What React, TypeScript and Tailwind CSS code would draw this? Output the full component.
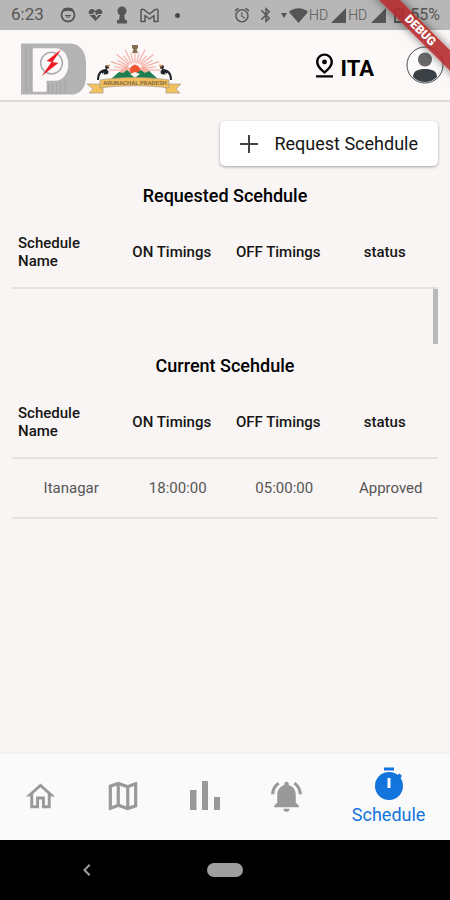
import React from "react";
import {
  MdAlarm,
  MdBluetooth,
  MdChevronLeft,
  MdNotificationsActive,
  MdOutlineHome,
  MdOutlineMap,
  MdOutlinePinDrop,
} from "react-icons/md";

const columns = ["Schedule Name", "ON Timings", "OFF Timings", "status"];

const currentSchedules = [
  { name: "Itanagar", on: "18:00:00", off: "05:00:00", status: "Approved" },
];

const rays = Array.from({ length: 17 }, (_, i) => {
  const angle = Math.PI + (i * Math.PI) / 16;
  const length = i % 2 === 0 ? 26 : 21;
  return {
    x1: 49 + Math.cos(angle) * 8,
    y1: 28 + Math.sin(angle) * 7,
    x2: 49 + Math.cos(angle) * length,
    y2: 28 + Math.sin(angle) * (length - 4),
  };
});

const SignalIcon = () => (
  <svg width="15" height="15" viewBox="0 0 15 15" fill="currentColor">
    <path d="M15 0v15H0z" />
  </svg>
);

const StatusBar = () => (
  <div className="flex h-[30px] items-center justify-between bg-[#b8b7b7] pl-[11px] pr-[10px] text-[#555555]">
    <div className="flex items-center">
      <span className="w-12 text-[17px]">6:23</span>
      <svg width="18" height="18" viewBox="0 0 18 18" fill="none" stroke="currentColor">
        <circle cx="9" cy="9" r="6.5" strokeWidth="1.8" />
        <path d="M3.500 5.500L5 2.500h8l1.500 3C12 4 6 4 3.500 5.500z" fill="currentColor" />
        <path d="M6 9.500h6M7 11h4" strokeWidth="1.200" />
      </svg>
      <svg className="ml-[11px]" width="15" height="14" viewBox="0 0 15 14" fill="currentColor">
        <path d="M7.500 13L1.500 7C-.5 4 1.500 1 4 1c1.500 0 2.700.8 3.500 2C8.300 1.800 9.500 1 11 1c2.500 0 4.500 3 2.500 6z" />
        <path d="M1 6.500h4l1.500-2 2 4 1.500-2h4" fill="none" stroke="#b8b7b7" strokeWidth="1.200" />
      </svg>
      <svg className="ml-[13px]" width="12" height="18" viewBox="0 0 12 18" fill="currentColor">
        <circle cx="6" cy="5" r="4.500" />
        <path d="M4 8h4l1 6h2v3.500H1V14h2z" />
      </svg>
      <svg className="ml-3" width="19" height="15" viewBox="0 0 19 15" fill="none" stroke="currentColor" strokeWidth="1.500" strokeLinejoin="round">
        <path d="M1 2.500V13.500H5V7.500L9.500 11 14 7.500v6h4v-11C18 1 16.300.8 15 1.700L9.500 6 4 1.700C2.700.8 1 1 1 2.500z" />
      </svg>
      <span className="ml-4 size-[5px] rounded-full bg-[#4a4a4a]" />
    </div>
    <div className="flex items-center">
      <MdAlarm size={18} />
      <MdBluetooth className="ml-[6px]" size={18} />
      <svg className="ml-[6px]" width="6" height="5" viewBox="0 0 6 5" fill="currentColor">
        <path d="M0 0h6L3 5z" />
      </svg>
      <svg className="ml-[2px]" width="19" height="15" viewBox="0 0 19 15" fill="currentColor">
        <path d="M0 4C5-1 14-1 19 4L9.500 15z" />
      </svg>
      <span className="ml-px text-sm font-light">HD</span>
      <span className="ml-[3px]">
        <SignalIcon />
      </span>
      <span className="ml-[2px] text-sm font-light">HD</span>
      <span className="ml-[4px]">
        <SignalIcon />
      </span>
      <svg className="ml-2" width="10" height="16" viewBox="0 0 10 16" fill="none" stroke="currentColor" strokeWidth="1.800">
        <path d="M1 2.500h8v12.500H1zM3.500 1h3" />
        <path d="M5.500 5L3.500 9h3l-2 4" strokeWidth="1.200" />
      </svg>
      <span className="ml-[6px] text-base">55%</span>
    </div>
  </div>
);

const PowerLogo = () => (
  <svg width="65" height="52" viewBox="0 0 66 52">
    <path d="M0 0H50C60 0 66 9 66 20V34C66 45 60 52 50 52H0z" fill="#b3b3b3" />
    <path d="M5 2v48M10 4v44M28 41v10M32 41v10M36 41v10M40 39v12M45 37v14" stroke="#a5a5a5" />
    <path d="M12 5H35C43 5 48 12 48 21S43 38 35 38H26V49H12z" fill="#fbf8f7" />
    <circle cx="31" cy="20" r="11" fill="none" stroke="#a9aaad" strokeWidth="1.500" />
    <path d="M41 6L26 18l5 1-10 14 17-13-6-1z" fill="#ee1c25" />
  </svg>
);

const Hornbill = () => (
  <>
    <path d="M12 38C12 32 15 28 21 28" fill="none" stroke="#202329" strokeWidth="2" />
    <ellipse cx="19" cy="30" rx="3.500" ry="2.500" fill="#202329" />
    <circle cx="21" cy="25" r="2" fill="#202329" />
    <path d="M20 24l3-1.500 1.500 1.500-3 1z" fill="#e0924e" />
    <path d="M14 34l4-3" stroke="#ffffff" />
  </>
);

const StateEmblem = () => (
  <svg width="96" height="54" viewBox="0 0 96 54">
    {rays.map((ray, index) => (
      <line key={index} {...ray} stroke="#f5b3aa" strokeWidth="1.200" />
    ))}
    <path d="M46 3h6v3l-1.500 1.500L52 11h-6l1.500-3.500L46 6z" fill="#857052" />
    <path d="M33 30L40 24l4 2 5-4 5 4 4-2 7 6-8 6H41z" fill="#f7b1a2" />
    <circle cx="49" cy="28" r="5" fill="#ef5330" />
    <path d="M25 37L33 30l4 1 4-3 5 4 4-1 5-3 4 3 4-2 9 8z" fill="#1c8050" />
    <path d="M44 32l5-2 5 2-4 3v3h-2v-3z" fill="#fbf3ee" />
    <Hornbill />
    <g transform="matrix(-1 0 0 1 97 0)">
      <Hornbill />
    </g>
    <path d="M1 42H17v9H3l4-4z" fill="#f2c25c" stroke="#a6998f" strokeWidth=".7" />
    <path d="M95 42H80v9H94l-4-4z" fill="#f2c25c" stroke="#a6998f" strokeWidth=".7" />
    <path d="M14 38C35 34.500 62 34.500 83 38V46C62 43 35 43 14 46z" fill="#f0bd5a" stroke="#a6998f" strokeWidth=".7" />
    <text x="49" y="43" textAnchor="middle" fontSize="6" fontWeight="500" fill="#756040">
      ARUNACHAL PRADESH
    </text>
  </svg>
);

const Avatar = () => (
  <svg width="38" height="38" viewBox="0 0 38 38">
    <clipPath id="avatar-clip">
      <circle cx="19" cy="19" r="17" />
    </clipPath>
    <circle cx="19" cy="19" r="18" fill="#fcfafa" stroke="#4b4e51" />
    <circle cx="19" cy="13.500" r="7" fill="#686868" />
    <path d="M7 38V31C7 25 12 23 19 23s12 2 12 8v7z" fill="#3b4145" clipPath="url(#avatar-clip)" />
  </svg>
);

const Header = () => (
  <header className="flex h-[72px] items-center border-b-2 border-[#dcd9d9] bg-[#fbf8f7] pl-[21px] pr-[6px]">
    <div className="flex items-center pt-2">
      <PowerLogo />
      <StateEmblem />
    </div>
    <button type="button" className="ml-auto flex items-end gap-[2px] text-black">
      <MdOutlinePinDrop size={29} />
      <span className="text-[22px] font-bold leading-[22px]">ITA</span>
    </button>
    <button type="button" aria-label="Profile" className="ml-8">
      <Avatar />
    </button>
  </header>
);

const DebugBanner = () => (
  <div className="pointer-events-none absolute right-0 top-0 size-24 overflow-hidden">
    <div className="absolute -right-[34px] top-[23px] h-[15px] w-32 rotate-45 bg-[#b52b2e]/90 text-center text-xs font-black leading-[15px] text-white shadow-[0_0_8px_rgba(0,0,0,0.5)]">
      DEBUG
    </div>
  </div>
);

const TableHead = () => (
  <thead>
    <tr className="h-[71px] border-b-2 border-[#e4e1e1]">
      {columns.map((column, index) => (
        <th
          key={column}
          scope="col"
          className={`px-[6px] text-[15px] font-medium leading-[18px] ${
            index == 0 ? "pr-8 text-left" : "whitespace-nowrap text-center"
          }`}
        >
          {column}
        </th>
      ))}
    </tr>
  </thead>
);

const TimerIcon = () => (
  <svg width="30" height="34" viewBox="0 0 30 34">
    <path d="M10 0.500h10v3H10z" fill="#1274dc" />
    <circle cx="15" cy="19" r="14" fill="#1274dc" />
    <path d="M22 9l3.500-2.500L28 9l-3 4z" fill="#1274dc" />
    <path d="M13.500 11h3v10h-3z" fill="#fafafa" />
  </svg>
);

const BarsIcon = () => (
  <svg width="32" height="32" viewBox="0 0 32 32" fill="currentColor">
    <path d="M1 10h6.500v20H1zM13 1h6v29h-6zM25 17h6v13h-6z" />
  </svg>
);

const navItems = [
  { label: "Home", icon: <MdOutlineHome size={35} /> },
  { label: "Map", icon: <MdOutlineMap size={38} /> },
  { label: "Reports", icon: <BarsIcon /> },
  { label: "Alerts", icon: <MdNotificationsActive size={37} /> },
];

const BottomNav = () => (
  <nav className="flex h-[88px] border-t-2 border-[#f3f0f0] bg-[#fafafa] text-[#999999]">
    {navItems.map((item) => (
      <a
        key={item.label}
        href="#"
        aria-label={item.label}
        className="flex flex-2 items-center justify-center pb-[2px]"
      >
        {item.icon}
      </a>
    ))}
    <a
      href="#"
      aria-current="page"
      className="flex flex-3 flex-col items-center justify-center gap-[2px] text-[#1274dc]"
    >
      <TimerIcon />
      <span className="text-[18px] leading-6">Schedule</span>
    </a>
  </nav>
);

const SystemBar = () => (
  <div className="grid h-[60px] grid-cols-3 items-center justify-items-center bg-black text-[#9e9e9e]">
    <button type="button" aria-label="Back" className="pl-6">
      <MdChevronLeft size={24} />
    </button>
    <button
      type="button"
      aria-label="System home"
      className="h-[14px] w-9 rounded-full bg-[#9e9e9e]"
    />
  </div>
);

const App = () => {
  return (
    <div className="relative flex min-h-screen flex-col overflow-hidden bg-[#f9f5f4] font-[Roboto,sans-serif] text-[#151515]">
      <StatusBar />
      <Header />
      <main className="flex-1 px-3 pt-[19px]">
        <div className="flex justify-end">
          <button
            type="button"
            className="flex h-[45px] items-center gap-4 rounded-[5px] bg-white px-5 text-[18px] shadow-[0_1px_3px_rgba(0,0,0,0.35)]"
          >
            <svg width="18" height="18" viewBox="0 0 18 18" stroke="#444444" strokeWidth="2">
              <path d="M9 0v18M0 9h18" />
            </svg>
            Request Scehdule
          </button>
        </div>
        <section className="mt-[18px]">
          <h2 className="text-center text-[18px] font-medium leading-6 text-black">
            Requested Scehdule
          </h2>
          <table className="mt-[9px] w-full table-fixed border-collapse">
            <TableHead />
          </table>
          <div className="flex h-[55px] justify-end">
            <div className="w-[5px] bg-[#bab9b9]" />
          </div>
        </section>
        <section className="mt-[10px]">
          <h2 className="text-center text-[18px] font-medium leading-6 text-black">
            Current Scehdule
          </h2>
          <table className="mt-[9px] w-full table-fixed border-collapse">
            <TableHead />
            <tbody>
              {currentSchedules.map((schedule) => (
                <tr
                  key={schedule.name}
                  className="h-[60px] border-b-2 border-[#e4e1e1] text-center text-[15px] text-[#555555]"
                >
                  <td className="pl-3">{schedule.name}</td>
                  <td className="pl-3">{schedule.on}</td>
                  <td className="pl-3">{schedule.off}</td>
                  <td className="pl-3">{schedule.status}</td>
                </tr>
              ))}
            </tbody>
          </table>
        </section>
      </main>
      <BottomNav />
      <SystemBar />
      <DebugBanner />
    </div>
  );
};

export default App;
